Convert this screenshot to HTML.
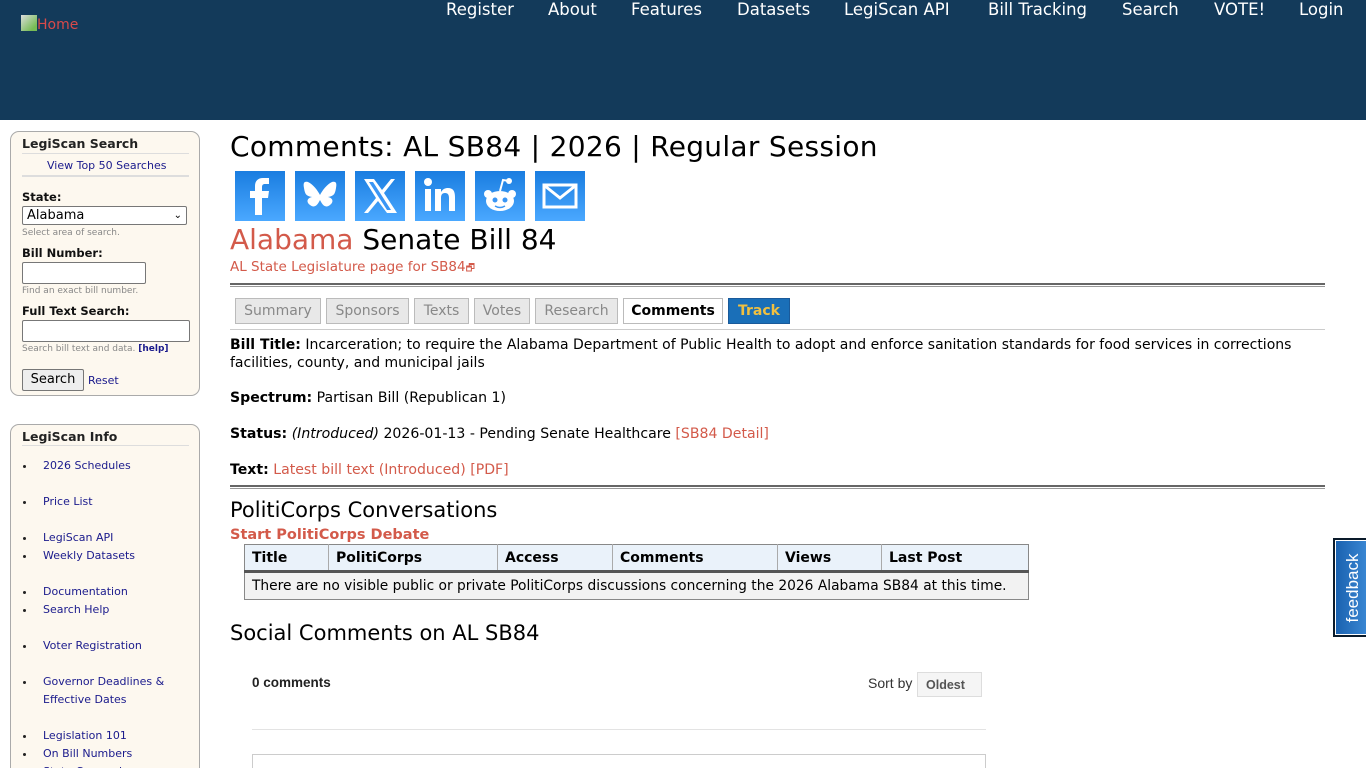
<!DOCTYPE html>
<html style="overflow:hidden;height:768px"><head><meta charset="utf-8"><style>
*{margin:0;padding:0;box-sizing:border-box}
body{width:1366px;height:768px;overflow:hidden;background:#fff;font-family:"DejaVu Sans","Liberation Sans",sans-serif;color:#000;position:relative}
.a{position:absolute;white-space:nowrap}
#hdr{position:absolute;left:0;top:0;width:1366px;height:120px;background:#133a5a}
#nav span{position:absolute;top:0;color:#fff;font-size:16.5px}
.box{position:absolute;left:10px;width:190px;background:#fdf8ef;border:1px solid #aaa;border-radius:9px;overflow:hidden}
.bh{position:absolute;left:11px;font-weight:bold;font-size:12.5px;color:#222}
.hr{position:absolute;left:11px;width:167px;height:2px;background:#ddd}
.lk{color:#1a1a8c}
.sm{font-size:9px;color:#888}
.lb{font-weight:bold;font-size:11.5px;color:#111}
.inp{position:absolute;background:#fff;border:1px solid #777;border-radius:2px}
.soc{position:absolute;top:171px;width:50px;height:50px;background:linear-gradient(#1a7de0,#4aa8ff)}
.tab{position:absolute;top:298px;height:26px;border:1px solid #bbb;background:#e8e8e8;color:#888;font-size:14px;text-align:center;line-height:24px}
.t{font-size:14.1px;left:230px}
b{font-weight:bold}
.red{color:#d35a4a}
table{border-collapse:collapse}
.li{position:relative;padding-left:22px}
.li:before{content:"";position:absolute;left:2px;top:8px;width:3px;height:3px;border-radius:50%;background:#222}
</style></head><body>
<div id="hdr"></div>
<div class="a" style="left:21px;top:15px;font-size:14px;color:#d94a4a"><span style="display:inline-block;width:16px;height:16px;background:linear-gradient(135deg,#ddd,#7b5 80%);vertical-align:-2px"></span>Home</div>
<div id="nav">
<span style="left:446px">Register</span><span style="left:548px">About</span><span style="left:631px">Features</span><span style="left:737px">Datasets</span><span style="left:844px">LegiScan API</span><span style="left:988px">Bill Tracking</span><span style="left:1122px">Search</span><span style="left:1214px">VOTE!</span><span style="left:1299px">Login</span>
</div>

<div class="box" style="top:131px;height:265px">
<div class="bh" style="top:4px">LegiScan Search</div>
<div class="hr" style="top:21px;height:1px"></div>
<div class="a lk" style="left:36px;top:27px;font-size:11px">View Top 50 Searches</div>
<div class="hr" style="top:43px"></div>
<div class="a lb" style="left:11px;top:58px">State:</div>
<div class="inp" style="left:11px;top:74px;width:165px;height:19px;font-size:13px;line-height:17px;padding-left:4px">Alabama<span style="position:absolute;right:4px;top:0;font-size:10px">&#8964;</span></div>
<div class="a sm" style="left:11px;top:96px">Select area of search.</div>
<div class="a lb" style="left:11px;top:114px">Bill Number:</div>
<div class="inp" style="left:11px;top:130px;width:124px;height:22px"></div>
<div class="a sm" style="left:11px;top:154px">Find an exact bill number.</div>
<div class="a lb" style="left:11px;top:172px">Full Text Search:</div>
<div class="inp" style="left:11px;top:188px;width:168px;height:22px"></div>
<div class="a sm" style="left:11px;top:212px">Search bill text and data. <b class="lk">[help]</b></div>
<div class="inp" style="left:11px;top:237px;width:62px;height:22px;background:#eee;font-size:13px;text-align:center;line-height:20px">Search</div>
<div class="a lk" style="left:77px;top:242px;font-size:11px">Reset</div>
</div>

<div class="box" style="top:424px;height:360px">
<div class="bh" style="top:4px">LegiScan Info</div>
<div class="hr" style="top:20px;height:1px"></div>
<div style="position:absolute;left:10px;top:32px;font-size:11px;line-height:18px;white-space:nowrap" class="lk">
<div class="li">2026 Schedules</div><br>
<div class="li">Price List</div><br>
<div class="li">LegiScan API</div><div class="li">Weekly Datasets</div><br>
<div class="li">Documentation</div><div class="li">Search Help</div><br>
<div class="li">Voter Registration</div><br>
<div class="li">Governor Deadlines &amp;</div><div style="padding-left:22px">Effective Dates</div><br>
<div class="li">Legislation 101</div><div class="li">On Bill Numbers</div><div class="li">State Comparison</div>
</div>
</div>

<div class="a" style="left:230px;top:130px;font-size:28px;letter-spacing:0.3px">Comments: AL SB84 | 2026 | Regular Session</div>
<div class="soc" style="left:235px"><svg width="50" height="50"><path d="M27 44V27h6l1-7h-7v-4c0-2 1-3 3-3h4V7h-6c-5 0-8 3-8 8v5h-5v7h5v17z" fill="#fff"/></svg></div>
<div class="soc" style="left:295px"><svg width="50" height="50"><path d="M13 11c5 2 10 9 12 13 2-4 7-11 12-13 4-1 5 1 4 6-1 6-2 8-8 9 5 1 6 5 2 8-5 4-8-1-10-5-2 4-5 9-10 5-4-3-3-7 2-8-6-1-7-3-8-9-1-5 0-7 4-6z" fill="#fff"/></svg></div>
<div class="soc" style="left:355px"><svg width="50" height="50"><path d="M9 8h10l8 11 9-11h4L29 22l13 20H32l-9-12-10 12H9l12-15z" fill="#fff"/><path d="M14 11h4l18 28h-4z" fill="#3a96f5"/></svg></div>
<div class="soc" style="left:415px"><svg width="50" height="50"><rect x="10" y="18" width="6" height="22" fill="#fff"/><circle cx="13" cy="11" r="4" fill="#fff"/><path d="M20 18h6v3c2-3 4-4 7-4 5 0 7 3 7 9v14h-6V27c0-3-1-5-4-5s-4 2-4 5v13h-6z" fill="#fff"/></svg></div>
<div class="soc" style="left:475px"><svg width="50" height="50"><ellipse cx="25" cy="30" rx="14" ry="10" fill="#fff"/><circle cx="13" cy="23" r="4" fill="#fff"/><circle cx="37" cy="23" r="4" fill="#fff"/><circle cx="34" cy="10" r="3" fill="#fff"/><path d="M25 20l3-11 6 1" stroke="#fff" stroke-width="2" fill="none"/><circle cx="20" cy="29" r="2.5" fill="#3a96f5"/><circle cx="30" cy="29" r="2.5" fill="#3a96f5"/><path d="M20 35q5 3 10 0" stroke="#3a96f5" stroke-width="1.5" fill="none"/></svg></div>
<div class="soc" style="left:535px"><svg width="50" height="50"><rect x="9" y="14" width="32" height="22" fill="none" stroke="#fff" stroke-width="3"/><path d="M10 15l15 12 15-12" stroke="#fff" stroke-width="3" fill="none"/></svg></div>

<div class="a" style="left:230px;top:223px;font-size:28px"><span class="red">Alabama</span> Senate Bill 84</div>
<div class="a red" style="left:230px;top:259px;font-size:13.5px">AL State Legislature page for SB84<span style="font-size:10px">&#x1F5D7;</span></div>
<div style="position:absolute;left:230px;top:283px;width:1095px;height:4px;border-top:2px solid #666;border-bottom:1px solid #999"></div>

<div class="tab" style="left:235px;width:86px">Summary</div>
<div class="tab" style="left:326px;width:83px">Sponsors</div>
<div class="tab" style="left:414px;width:55px">Texts</div>
<div class="tab" style="left:474px;width:56px">Votes</div>
<div class="tab" style="left:535px;width:83px">Research</div>
<div class="tab" style="left:623px;width:100px;background:#fff;color:#000;font-weight:bold">Comments</div>
<div class="tab" style="left:728px;width:62px;background:#1a6fb8;border-color:#1a5a9a;color:#f0c040;font-weight:bold">Track</div>
<div style="position:absolute;left:230px;top:329px;width:1095px;height:1px;background:#ccc"></div>

<div class="a t" style="top:336px;white-space:normal;width:1095px;line-height:18px;font-size:14px"><b>Bill Title:</b> Incarceration; to require the Alabama Department of Public Health to adopt and enforce sanitation standards for food services in corrections facilities, county, and municipal jails</div>
<div class="a t" style="top:390px"><b>Spectrum:</b> Partisan Bill (Republican 1)</div>
<div class="a t" style="top:426px"><b>Status:</b> <i>(Introduced)</i> 2026-01-13 - Pending Senate Healthcare <span class="red">[SB84 Detail]</span></div>
<div class="a t" style="top:462px"><b>Text:</b> <span class="red">Latest bill text (Introduced) [PDF]</span></div>
<div style="position:absolute;left:230px;top:485px;width:1095px;height:4px;border-top:2px solid #666;border-bottom:1px solid #999"></div>

<div class="a" style="left:230px;top:498px;font-size:21px">PolitiCorps Conversations</div>
<div class="a red" style="left:230px;top:527px;font-size:14.5px;font-weight:bold">Start PolitiCorps Debate</div>
<table style="position:absolute;left:244px;top:544px;width:785px;font-size:14px;border:1px solid #888">
<tr style="background:#eaf2fa;font-weight:bold;height:27px;border-bottom:3px solid #555">
<td style="width:84px;padding-left:7px;border-right:1px solid #aaa">Title</td><td style="width:169px;padding-left:7px;border-right:1px solid #aaa">PolitiCorps</td><td style="width:115px;padding-left:7px;border-right:1px solid #aaa">Access</td><td style="width:165px;padding-left:7px;border-right:1px solid #aaa">Comments</td><td style="width:104px;padding-left:7px;border-right:1px solid #aaa">Views</td><td style="padding-left:7px">Last Post</td></tr>
<tr style="background:#f2f2f2;height:28px"><td colspan="6" style="padding-left:7px;white-space:nowrap;font-size:13.8px">There are no visible public or private PolitiCorps discussions concerning the 2026 Alabama SB84 at this time.</td></tr>
</table>

<div class="a" style="left:230px;top:621px;font-size:21px">Social Comments on AL SB84</div>
<div class="a" style="left:252px;top:675px;font-size:13.5px;font-weight:bold;font-family:'Liberation Sans',sans-serif;color:#222">0 comments</div>
<div class="a" style="left:868px;top:675px;font-size:14px;font-family:'Liberation Sans',sans-serif;color:#333">Sort by</div>
<div class="a" style="left:917px;top:672px;width:65px;height:25px;background:#f5f5f5;border:1px solid #ddd;font-size:12.5px;font-weight:bold;font-family:'Liberation Sans',sans-serif;color:#555;padding:5px 8px">Oldest</div>
<div style="position:absolute;left:252px;top:729px;width:734px;height:1px;background:#e3e3e3"></div>
<div style="position:absolute;left:252px;top:754px;width:734px;height:30px;border:1px solid #ccc"></div>

<div style="position:absolute;left:1333px;top:538px;width:40px;height:99px;background:#0a1a2a;padding:2px"><div style="width:100%;height:100%;background:linear-gradient(90deg,#1a62b0,#3d8ad6);border:1px solid #fff;position:relative"><div style="position:absolute;left:50%;top:50%;transform:translate(-50%,-50%) rotate(-90deg);color:#fff;font-size:17px;font-family:'Liberation Sans',sans-serif">feedback</div></div></div>
</body></html>
